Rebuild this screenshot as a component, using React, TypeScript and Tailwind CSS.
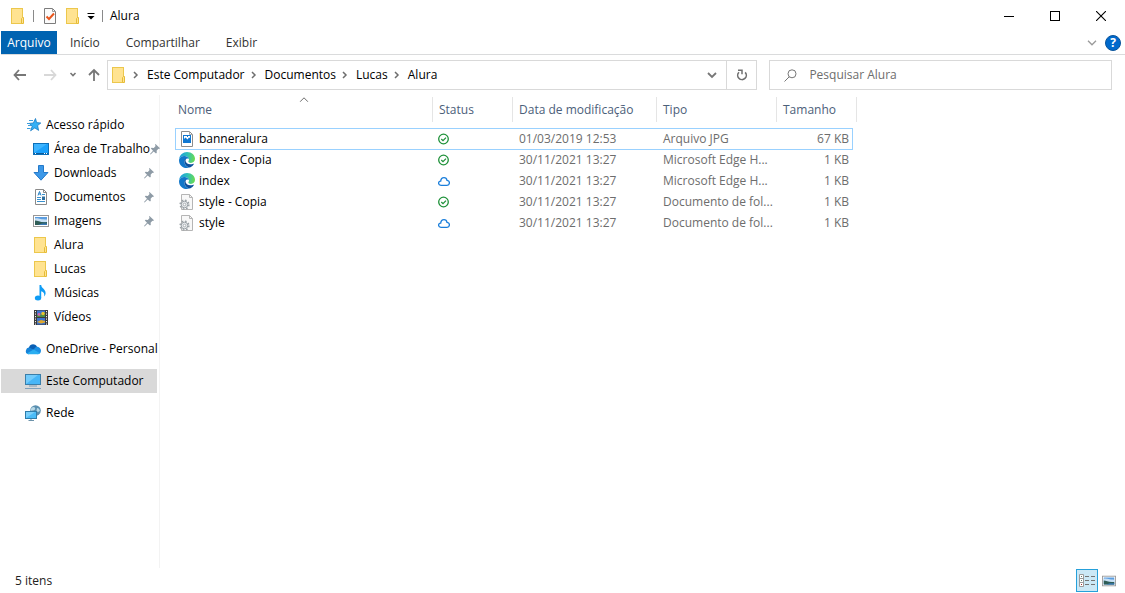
import type { ReactNode } from 'react'

type IconProps = { className?: string }

/* ---------- Icons ---------- */

function FolderIcon({ className = '' }: IconProps) {
  return (
    <svg width="16" height="16" viewBox="0 0 16 16" className={`shrink-0 ${className}`} aria-hidden="true">
      <rect x="1.5" y="0.5" width="11" height="15" fill="#ffe391" stroke="#ecc74c" />
      <path d="M11.5 15.5V10.5L12.5 9.5H13.5V15.5Z" fill="#ffe391" stroke="#e6bc38" />
    </svg>
  )
}

function PropertiesIcon() {
  return (
    <svg width="16" height="16" viewBox="0 0 16 16" className="shrink-0" aria-hidden="true">
      <path d="M2.5 0.5H10.5L13.5 3.5V15.5H2.5Z" fill="#fbfbfb" stroke="#7c7c7c" />
      <path d="M10.5 0.5V3.5H13.5" fill="none" stroke="#9b9b9b" />
      <path d="M4.5 8.5L7 11L12 5.5" fill="none" stroke="#e8561e" strokeWidth="2" />
    </svg>
  )
}

function ChevronRight() {
  return (
    <svg width="20" height="8" viewBox="0 0 20 8" className="shrink-0" aria-hidden="true">
      <path d="M7 1L10 4L7 7" fill="none" stroke="#6e6e6e" strokeWidth="1.5" />
    </svg>
  )
}

function ArrowLeft({ color }: { color: string }) {
  return (
    <svg width="14" height="12" viewBox="0 0 14 12" aria-hidden="true">
      <path d="M6 1L1.5 6L6 11M1.5 6H13" fill="none" stroke={color} strokeWidth="1.8" />
    </svg>
  )
}

function StarIcon() {
  return (
    <svg width="16" height="16" viewBox="0 0 16 16" className="shrink-0" aria-hidden="true">
      <path
        d="M10.5 1.5L11.6 5.6L15.8 6L12.6 8.6L13.6 13.4L9.8 10.9L5.6 13.8L7.2 9.2L4.2 6.4L8.4 6Z"
        fill="#35b0f5"
        stroke="#1b7cc4"
        strokeWidth="0.8"
      />
      <path d="M4 3.5H8M2 6.5H4M3 8.5H6M2 11.5H5.5" stroke="#3b9ddd" />
    </svg>
  )
}

function DesktopIcon() {
  return (
    <svg width="16" height="16" viewBox="0 0 16 16" className="shrink-0" aria-hidden="true">
      <rect x="0.5" y="2.5" width="15" height="11" fill="#1ba1fb" stroke="#0c6fb8" />
      <path d="M1 12V3H14Z" fill="#3db4ff" />
      <path d="M1 12.5H15" stroke="#0b5c9b" />
      <path d="M2 12.5H3M11 12.5H12M13 12.5H14" stroke="#fff" />
    </svg>
  )
}

function DownloadIcon() {
  return (
    <svg width="16" height="16" viewBox="0 0 16 16" className="shrink-0" aria-hidden="true">
      <path d="M5.5 0.5H10.5V7.5H15L8 15.2L1 7.5H5.5Z" fill="#3c98e8" stroke="#2479c9" />
    </svg>
  )
}

function DocumentIcon() {
  return (
    <svg width="16" height="16" viewBox="0 0 16 16" className="shrink-0" aria-hidden="true">
      <path d="M2.5 0.5H10.5L13.5 3.5V15.5H2.5Z" fill="#fff" stroke="#8a8a8a" />
      <path d="M10.5 0.5V3.5H13.5" fill="none" stroke="#8a8a8a" />
      <path d="M5 6.5L6.5 2.5L8 6.5M5.5 5H7.5" fill="none" stroke="#2a83c6" />
      <path d="M9 5.5H12M4 8.5H8M4 10.5H8M4 12.5H12" stroke="#3991cf" />
      <rect x="9" y="7.5" width="3" height="3.5" fill="#2e6e9e" />
    </svg>
  )
}

function PictureIcon({ className = '' }: IconProps) {
  return (
    <svg width="16" height="12" viewBox="0 0 16 12" className={`shrink-0 ${className}`} aria-hidden="true">
      <rect x="0.5" y="0.5" width="15" height="11" fill="#fff" stroke="#979797" />
      <rect x="2" y="2" width="12" height="8" fill="#5b9de0" />
      <path d="M2 3.5C5 2.5 7 4.5 14 4.5V7H2Z" fill="#c8e0f4" />
      <path d="M2 5.5C5 5.5 8 8 14 7V10H2Z" fill="#2f5d56" />
      <path d="M5 10L9 8.5H14V10Z" fill="#3979b5" />
    </svg>
  )
}

function MusicIcon() {
  return (
    <svg width="16" height="16" viewBox="0 0 16 16" className="shrink-0" aria-hidden="true">
      <ellipse cx="5" cy="13" rx="3.2" ry="2.5" fill="#0f9cf5" />
      <path d="M6.5 0H8.2C8.4 3.4 12.8 4.2 12.6 8.2C12.5 9.6 12 10.6 11 11.4C11.8 8.8 11 7 8.2 6.2V13H6.5Z" fill="#0f9cf5" />
    </svg>
  )
}

function VideoIcon() {
  return (
    <svg width="16" height="16" viewBox="0 0 16 16" className="shrink-0" aria-hidden="true">
      <rect x="1" y="1" width="14" height="15" fill="#3c3c3c" />
      <rect x="4" y="1.5" width="8" height="6.5" fill="#3e74d0" />
      <rect x="4" y="9" width="8" height="6.5" fill="#3e74d0" />
      <path d="M4 6L7 4L9 6L12 3V8H4Z" fill="#4b8f45" />
      <circle cx="6" cy="5.5" r="1.4" fill="#d664a8" />
      <circle cx="10" cy="4.5" r="1.7" fill="#efc42c" />
      <path d="M4 13L8 11L12 12V13.5L8 14.5Z" fill="#e0a92d" />
      <path d="M2.5 2V16M13.5 2V16" stroke="#f2f2f2" strokeDasharray="1.2 1.3" />
    </svg>
  )
}

function OneDriveIcon() {
  return (
    <svg width="16" height="16" viewBox="0 0 16 16" className="shrink-0" aria-hidden="true">
      <path d="M4 6.5C5 3 9.5 2 12 5.6L9 9L3 8Z" fill="#0a5fb4" />
      <path d="M3.4 13.2A3.3 3.3 0 1 1 5 6.7L12 11Z" fill="#1683d8" />
      <path d="M8.5 8.4L11.4 5.6C14.4 5.8 16 8 16 9.8C16 12 14.5 13.2 12.6 13.2Z" fill="#1c8fe3" />
      <path d="M1.8 12.6L8.6 8.6L15 12.2C14.4 12.9 13.5 13.2 12.6 13.2H3.5C2.8 13.2 2.3 13 1.8 12.6Z" fill="#2aaef1" />
    </svg>
  )
}

function ComputerIcon() {
  return (
    <svg width="16" height="16" viewBox="0 0 16 16" className="shrink-0" aria-hidden="true">
      <rect x="0.5" y="1.5" width="15" height="10" fill="#47b6f7" stroke="#3a7ea9" />
      <path d="M1 11V2H13Z" fill="#72cbfb" />
      <path d="M4 13H12" stroke="#7d9bb2" />
      <path d="M0 15.5H16" stroke="#7fa1bb" />
    </svg>
  )
}

function NetworkIcon() {
  return (
    <svg width="16" height="16" viewBox="0 0 16 16" className="shrink-0" aria-hidden="true">
      <circle cx="10.5" cy="5.5" r="5.3" fill="#5a8fb0" />
      <path d="M7 2.5C9 1 11 3 10 4.5C8.5 6 7 5 6 6C5.5 4.5 6 3.4 7 2.5ZM12 3C14 3 15 5 14.8 6L13 7L11.5 6Z" fill="#b9d9e6" />
      <rect x="0.5" y="6.5" width="11" height="7" fill="#4bbcf8" stroke="#2f7dab" />
      <path d="M1 13V7H10Z" fill="#7bd0fb" />
      <path d="M6 14V15M3.5 15.5H9" stroke="#6d93aa" />
    </svg>
  )
}

function PinIcon() {
  return (
    <svg width="10" height="11" viewBox="0 0 10 11" className="shrink-0" aria-hidden="true">
      <path d="M5.5 0L10 4.2L9 5L8.4 4.8L6.6 6.8L6.8 8.8L6 9.6L3.7 7.4L0.6 10.6L0 10L3 6.8L0.8 4.6L1.6 3.8L3.8 4L5.6 2L5 0.8Z" fill="#8e9ba6" />
    </svg>
  )
}

function ImageFileIcon() {
  return (
    <svg width="16" height="16" viewBox="0 0 16 16" className="shrink-0" aria-hidden="true">
      <path d="M2.5 0.5H10.5L13.5 3.5V15.5H2.5Z" fill="#fff" stroke="#8c8c8c" />
      <path d="M10.5 0.5V3.5H13.5" fill="none" stroke="#a8a8a8" />
      <rect x="4" y="4" width="8" height="8" fill="#0f77d2" />
      <path d="M5 5H11V7L10 6.5L8.5 8.5L6.5 6.5L5 8Z" fill="#fff" />
      <rect x="8" y="5" width="1" height="1" fill="#0f77d2" />
    </svg>
  )
}

function EdgeIcon() {
  return (
    <svg width="16" height="16" viewBox="0 0 16 16" className="shrink-0" aria-hidden="true">
      <defs>
        <linearGradient id="edge-top" x1="0" y1="0.4" x2="1" y2="0.5">
          <stop offset="0" stopColor="#1a9de0" />
          <stop offset="0.5" stopColor="#30c0b8" />
          <stop offset="1" stopColor="#6bdc4e" />
        </linearGradient>
      </defs>
      <path d="M0.1 7.2C0.6 3 4 0 8 0C12.8 0 16 3.2 16 6.8C16 9.2 14.2 10.9 11.9 10.9C10.4 10.9 9.4 10.3 9.4 9.6C9.4 9 10 8.8 10 7.6C10 5.6 8 4 5.4 4C2.8 4 0.8 5.4 0.1 7.2Z" fill="url(#edge-top)" />
      <path d="M0.1 7.4C0.8 5.2 3 3.9 5.4 4C7.8 4.1 9.6 5.3 10 7C8.6 6 6.2 6.6 5.6 9C5 11.8 7 15 10.5 15.5C4.5 17.5 -0.6 13 0.1 7.4Z" fill="#1277c9" />
      <path d="M5.6 8.2C4.8 11.6 7.4 15 11 15.4C12.8 14.6 14.2 13.3 14.9 12C14.9 11.7 14.7 11.6 14.4 11.7C10.6 13.2 6.6 11.8 6.5 8.6C6.5 7.8 6.7 7.2 7.1 6.6C6.4 6.8 5.8 7.4 5.6 8.2Z" fill="#0c509c" />
    </svg>
  )
}

function CssFileIcon() {
  return (
    <svg width="16" height="16" viewBox="0 0 16 16" className="shrink-0" aria-hidden="true">
      <path d="M2.5 0.5H10.5L13.5 3.5V15.5H2.5Z" fill="#f8f8f8" stroke="#b5b5b5" />
      <path d="M10.5 0.5V3.5H13.5" fill="none" stroke="#b5b5b5" />
      <circle cx="5.5" cy="10.5" r="4.4" fill="none" stroke="#9aa1a6" strokeWidth="1.4" strokeDasharray="1.7 1.755" />
      <circle cx="5.5" cy="10.5" r="3.3" fill="#e8ebed" stroke="#9aa1a6" strokeWidth="1" />
      <circle cx="5.5" cy="10.5" r="1.3" fill="#fff" stroke="#9aa1a6" strokeWidth="0.8" />
    </svg>
  )
}

function SyncedIcon() {
  return (
    <svg width="12" height="12" viewBox="0 0 12 12" role="img" aria-label="Disponível neste dispositivo">
      <circle cx="5.5" cy="6" r="4.8" fill="none" stroke="#1e9139" strokeWidth="1.3" />
      <path d="M3.3 6L5 7.6L8 4.6" fill="none" stroke="#1e9139" strokeWidth="1.3" />
    </svg>
  )
}

function CloudIcon() {
  return (
    <svg width="12" height="12" viewBox="0 0 12 12" role="img" aria-label="Disponível quando online">
      <path
        d="M3 10.3C1.5 10.3 0.6 9.4 0.6 8.2C0.6 7 1.5 6.1 2.7 6.1C2.9 3.9 4.2 2.6 6 2.6C7.6 2.6 8.7 3.6 9 5.3C10.5 5.4 11.4 6.4 11.4 7.8C11.4 9.3 10.4 10.3 9 10.3Z"
        fill="none"
        stroke="#1a7edb"
        strokeWidth="1.3"
      />
    </svg>
  )
}

/* ---------- Data ---------- */

const tabs = ['Início', 'Compartilhar', 'Exibir']
const path = ['Este Computador', 'Documentos', 'Lucas', 'Alura']

const quickAccess = [
  { label: 'Área de Trabalho', icon: <DesktopIcon />, pinned: true },
  { label: 'Downloads', icon: <DownloadIcon />, pinned: true },
  { label: 'Documentos', icon: <DocumentIcon />, pinned: true },
  { label: 'Imagens', icon: <PictureIcon />, pinned: true },
  { label: 'Alura', icon: <FolderIcon />, pinned: false },
  { label: 'Lucas', icon: <FolderIcon />, pinned: false },
  { label: 'Músicas', icon: <MusicIcon />, pinned: false },
  { label: 'Vídeos', icon: <VideoIcon />, pinned: false },
]

const files = [
  { name: 'banneralura', icon: <ImageFileIcon />, synced: true, date: '01/03/2019 12:53', type: 'Arquivo JPG', size: '67 KB', focused: true },
  { name: 'index - Copia', icon: <EdgeIcon />, synced: true, date: '30/11/2021 13:27', type: 'Microsoft Edge H...', size: '1 KB', focused: false },
  { name: 'index', icon: <EdgeIcon />, synced: false, date: '30/11/2021 13:27', type: 'Microsoft Edge H...', size: '1 KB', focused: false },
  { name: 'style - Copia', icon: <CssFileIcon />, synced: true, date: '30/11/2021 13:27', type: 'Documento de fol...', size: '1 KB', focused: false },
  { name: 'style', icon: <CssFileIcon />, synced: false, date: '30/11/2021 13:27', type: 'Documento de fol...', size: '1 KB', focused: false },
]

/* ---------- Sections ---------- */

function TitleBar() {
  return (
    <header className="flex h-[31px] items-center">
      <div className="flex items-center pl-[9px]">
        <FolderIcon />
        <span className="mx-[7px] h-3 w-px bg-[#8a8a8a]" />
        <button type="button" aria-label="Propriedades" className="ml-px">
          <PropertiesIcon />
        </button>
        <button type="button" aria-label="Nova pasta" className="ml-[7px]">
          <FolderIcon />
        </button>
        <button type="button" aria-label="Personalizar barra" className="ml-1.5">
          <svg width="8" height="8" viewBox="0 0 8 8">
            <path d="M0.5 1.5H7.5" stroke="#000" />
            <path d="M0.5 4H7.5L4 7.5Z" fill="#000" />
          </svg>
        </button>
        <span className="mx-[7px] h-3 w-px bg-[#8a8a8a]" />
      </div>
      <h1>Alura</h1>
      <div className="ml-auto flex h-full pr-px">
        <button type="button" aria-label="Minimizar" className="flex w-[46px] items-center justify-center">
          <svg width="10" height="10" viewBox="0 0 10 10">
            <path d="M0 5.5H10" stroke="#000" />
          </svg>
        </button>
        <button type="button" aria-label="Maximizar" className="flex w-[46px] items-center justify-center">
          <svg width="10" height="10" viewBox="0 0 10 10">
            <rect x="0.5" y="0.5" width="9" height="9" fill="none" stroke="#000" />
          </svg>
        </button>
        <button type="button" aria-label="Fechar" className="flex w-[46px] items-center justify-center">
          <svg width="10" height="10" viewBox="0 0 10 10">
            <path d="M0 0L10 10M10 0L0 10" stroke="#000" strokeWidth="1.1" />
          </svg>
        </button>
      </div>
    </header>
  )
}

function Ribbon() {
  return (
    <nav className="flex h-6 border-b border-[#dadbdc]">
      <button type="button" className="w-14 bg-[#0063b1] text-white">
        Arquivo
      </button>
      {tabs.map((tab) => (
        <button key={tab} type="button" className="px-[13px] text-[#333]">
          {tab}
        </button>
      ))}
      <div className="ml-auto flex items-center gap-2 pr-1">
        <button type="button" aria-label="Expandir a faixa de opções">
          <svg width="10" height="6" viewBox="0 0 10 6">
            <path d="M1 0.8L5 4.8L9 0.8" fill="none" stroke="#9a9a9a" strokeWidth="1.3" />
          </svg>
        </button>
        <button
          type="button"
          aria-label="Ajuda"
          className="flex size-4 items-center justify-center rounded-full border border-[#0a549b] bg-[#0069cc] font-bold text-white"
        >
          ?
        </button>
      </div>
    </nav>
  )
}

function AddressBar() {
  return (
    <div className="flex h-10 items-center pr-[13px]">
      <div className="flex w-[106px] shrink-0 items-center pl-3">
        <button type="button" aria-label="Voltar">
          <ArrowLeft color="#777" />
        </button>
        <button type="button" aria-label="Avançar" className="ml-4 rotate-180">
          <ArrowLeft color="#d8d8d8" />
        </button>
        <button type="button" aria-label="Locais recentes" className="ml-3">
          <svg width="8" height="6" viewBox="0 0 8 6">
            <path d="M1.5 1L4 3.5L6.5 1" fill="none" stroke="#777" strokeWidth="1.6" />
          </svg>
        </button>
        <button type="button" aria-label="Acima" className="ml-[11px]">
          <svg width="12" height="14" viewBox="0 0 12 14">
            <path d="M1 7L6 2L11 7M6 2V13" fill="none" stroke="#777" strokeWidth="1.8" />
          </svg>
        </button>
      </div>
      <div className="flex h-[30px] flex-[651] items-center border border-[#d9d9d9]">
        <FolderIcon className="ml-[3px]" />
        {path.map((part) => (
          <span key={part} className="flex items-center">
            <ChevronRight />
            <a href="#">{part}</a>
          </span>
        ))}
        <button type="button" aria-label="Locais anteriores" className="ml-auto px-[9px]">
          <svg width="10" height="8" viewBox="0 0 10 8">
            <path d="M1 2L5 6L9 2" fill="none" stroke="#777" strokeWidth="1.8" />
          </svg>
        </button>
        <button type="button" aria-label="Atualizar" className="flex h-full w-[30px] items-center justify-center border-l border-[#d9d9d9]">
          <svg width="12" height="12" viewBox="0 0 12 12">
            <path d="M3 3.2A4.3 4.3 0 1 0 9.2 3.4" fill="none" stroke="#707070" strokeWidth="1.6" />
            <path d="M2 1.2H6V5.2" fill="none" stroke="#707070" strokeWidth="1.5" />
          </svg>
        </button>
      </div>
      <label className="ml-3 flex h-[30px] flex-[342] items-center border border-[#d9d9d9]">
        <svg width="13" height="13" viewBox="0 0 13 13" className="ml-3.5 shrink-0" aria-hidden="true">
          <circle cx="8" cy="4.8" r="4" fill="none" stroke="#777" />
          <path d="M5.2 7.8L0.5 12.5" stroke="#777" />
        </svg>
        <input
          type="search"
          aria-label="Pesquisar Alura"
          placeholder="Pesquisar Alura"
          className="ml-3 w-full min-w-0 outline-none placeholder:text-[#6d6d6d]"
        />
      </label>
    </div>
  )
}

type NavItemProps = { label: string; icon: ReactNode; nested?: boolean; pinned?: boolean; active?: boolean }

function NavItem({ label, icon, nested = false, pinned = false, active = false }: NavItemProps) {
  return (
    <a
      href="#"
      className={`flex h-6 items-center pr-[3px] ${nested ? 'pl-8' : 'pl-6'} ${active ? 'bg-[#d9d9d9]' : ''}`}
    >
      {icon}
      <span className="ml-[5px] shrink-0 grow whitespace-nowrap">{label}</span>
      {pinned && <PinIcon />}
    </a>
  )
}

function Sidebar() {
  return (
    <aside className="flex w-[159px] shrink-0 flex-col gap-2 border-r border-[#f3f3f3] pt-[18px] pr-0.5">
      <div>
        <NavItem label="Acesso rápido" icon={<StarIcon />} />
        {quickAccess.map((item) => (
          <NavItem key={item.label} label={item.label} icon={item.icon} pinned={item.pinned} nested />
        ))}
      </div>
      <NavItem label="OneDrive - Personal" icon={<OneDriveIcon />} />
      <NavItem label="Este Computador" icon={<ComputerIcon />} active />
      <NavItem label="Rede" icon={<NetworkIcon />} />
    </aside>
  )
}

function HeaderCell({ children, className = '' }: { children: ReactNode; className?: string }) {
  return (
    <th className="p-0 pb-1.5 text-left font-normal">
      <div className={`relative flex h-[25px] items-center border-r border-[#e5e5e5] text-[#4c607a] ${className}`}>
        {children}
      </div>
    </th>
  )
}

function FileTable() {
  return (
    <table className="w-[678px] table-fixed border-separate border-spacing-0 whitespace-nowrap">
      <colgroup>
        <col className="w-[258px]" />
        <col className="w-20" />
        <col className="w-36" />
        <col className="w-[120px]" />
        <col className="w-[76px]" />
      </colgroup>
      <thead>
        <tr>
          <HeaderCell className="pl-[3px]">
            Nome
            <svg width="9" height="6" viewBox="0 0 9 6" className="absolute top-0 left-1/2 -translate-x-1/2" aria-hidden="true">
              <path d="M0.5 4.8L4.5 0.8L8.5 4.8" fill="none" stroke="#6d6d6d" />
            </svg>
          </HeaderCell>
          <HeaderCell className="pl-1.5">Status</HeaderCell>
          <HeaderCell className="pl-1.5">Data de modificação</HeaderCell>
          <HeaderCell className="pl-1.5">Tipo</HeaderCell>
          <HeaderCell className="-mr-1 pl-1.5">Tamanho</HeaderCell>
        </tr>
      </thead>
      <tbody className="text-[#6d6d6d]">
        {files.map((file) => {
          const edge = file.focused ? 'border-y border-[#99d1ff]' : ''
          const cell = `p-0 pt-0.5 align-top ${edge}`
          return (
            <tr key={file.name} className={file.focused ? 'h-[22px]' : 'h-[21px]'}>
              <td className={`${cell} text-black ${file.focused ? 'border-l pl-[3px]' : 'pl-1'}`}>
                <span className="flex items-center gap-1">
                  {file.icon}
                  {file.name}
                </span>
              </td>
              <td className={`${cell} pl-[5px]`}>
                <span className="flex h-4 items-center">{file.synced ? <SyncedIcon /> : <CloudIcon />}</span>
              </td>
              <td className={`${cell} pl-1.5`}>{file.date}</td>
              <td className={`${cell} pl-1.5`}>{file.type}</td>
              <td className={`${cell} text-right ${file.focused ? 'border-r pr-[3px]' : 'pr-1'}`}>{file.size}</td>
            </tr>
          )
        })}
      </tbody>
    </table>
  )
}

function StatusBar() {
  return (
    <footer className="flex h-[25px] items-center pr-[9px] pl-3.5 text-[#222]">
      <span>5 itens</span>
      <div className="ml-auto flex items-center gap-1">
        <button
          type="button"
          aria-label="Detalhes"
          className="flex h-[23px] w-[22px] items-center justify-center border border-[#26a0da] bg-[#cbe8f6]"
        >
          <svg width="16" height="13" viewBox="0 0 16 13">
            <path d="M0.5 0.5H4.5V12.5H0.5ZM0.5 4.5H4.5M0.5 8.5H4.5" fill="#fff" stroke="#9b9b9b" />
            <path d="M2 2.5H3M2 6.5H3" stroke="#5c7d6b" />
            <path d="M2 10.5H3" stroke="#a33030" />
            <path d="M6 2.5H10M12 2.5H16M6 6.5H10M12 6.5H16M6 10.5H10M12 10.5H16" stroke="#747474" />
          </svg>
        </button>
        <button type="button" aria-label="Miniaturas grandes">
          <PictureIcon className="w-3.5" />
        </button>
      </div>
    </footer>
  )
}

export default function App() {
  return (
    <div className="flex min-h-screen flex-col bg-white pl-px font-['Open_Sans','Noto_Sans',sans-serif] text-[12px] leading-4 text-black">
      <TitleBar />
      <Ribbon />
      <AddressBar />
      <div className="flex flex-1">
        <Sidebar />
        <main className="min-w-0 flex-1 pt-0.5 pl-[15px]">
          <FileTable />
        </main>
      </div>
      <StatusBar />
    </div>
  )
}
